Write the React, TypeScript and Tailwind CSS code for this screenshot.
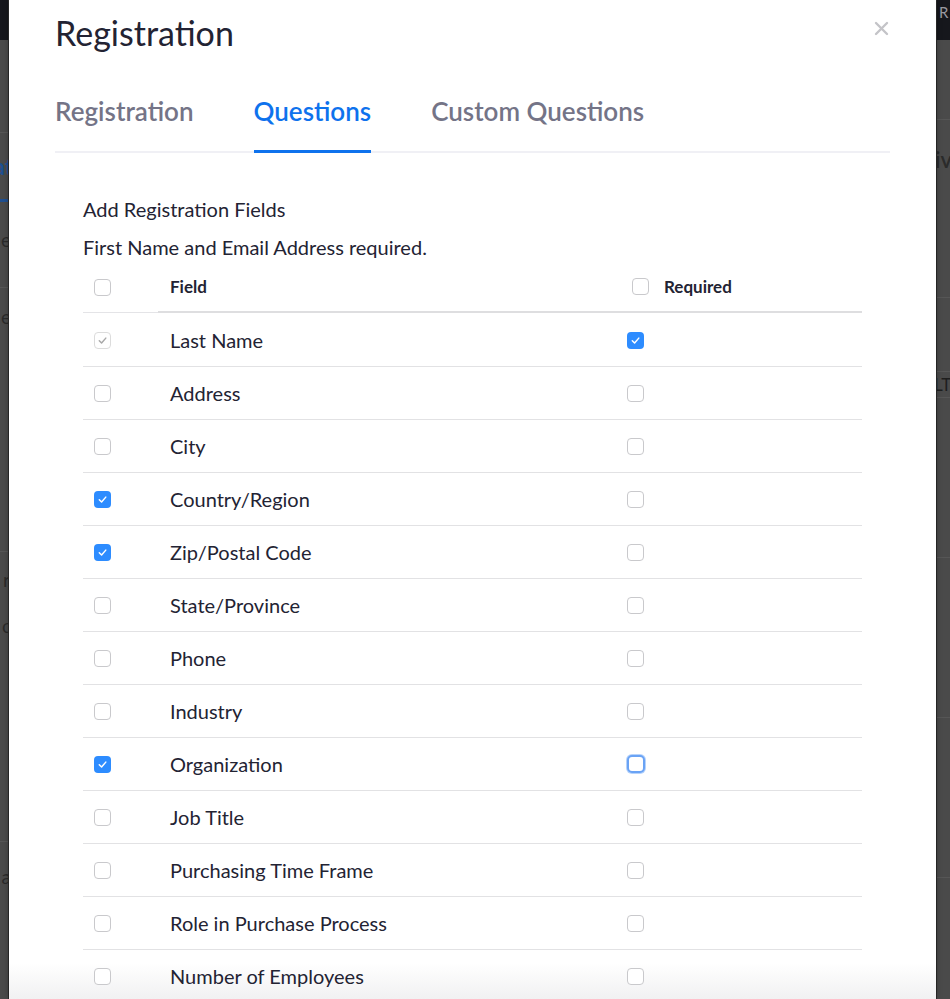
import React from 'react';

type BoxState = 'off' | 'on' | 'locked' | 'focus';

const fields: { label: string; include: BoxState; required: BoxState }[] = [
  { label: 'Last Name', include: 'locked', required: 'on' },
  { label: 'Address', include: 'off', required: 'off' },
  { label: 'City', include: 'off', required: 'off' },
  { label: 'Country/Region', include: 'on', required: 'off' },
  { label: 'Zip/Postal Code', include: 'on', required: 'off' },
  { label: 'State/Province', include: 'off', required: 'off' },
  { label: 'Phone', include: 'off', required: 'off' },
  { label: 'Industry', include: 'off', required: 'off' },
  { label: 'Organization', include: 'on', required: 'focus' },
  { label: 'Job Title', include: 'off', required: 'off' },
  { label: 'Purchasing Time Frame', include: 'off', required: 'off' },
  { label: 'Role in Purchase Process', include: 'off', required: 'off' },
  { label: 'Number of Employees', include: 'off', required: 'off' },
];

function Check({ color }: { color: string }) {
  return (
    <svg width="11" height="11" viewBox="0 0 12 12" fill="none">
      <path d="M2.5 6.3 5 8.8 9.6 3.4" stroke={color} strokeWidth="1.6" strokeLinecap="round" strokeLinejoin="round" />
    </svg>
  );
}

function Box({ state }: { state: BoxState }) {
  if (state === 'on') {
    return (
      <span className="w-[17px] h-[17px] rounded-[4px] bg-[#2d8cff] flex items-center justify-center">
        <Check color="#ffffff" />
      </span>
    );
  }
  if (state === 'locked') {
    return (
      <span className="w-[17px] h-[17px] rounded-[4px] border border-[#dcdcdc] bg-white flex items-center justify-center">
        <Check color="#a8a8a8" />
      </span>
    );
  }
  if (state === 'focus') {
    return <span className="w-[18px] h-[18px] rounded-[5px] border-2 border-[#6aa3f5] bg-white ring-1 ring-[#b6d3fb]" />;
  }
  return <span className="w-[17px] h-[17px] rounded-[4px] border border-[#c9c9cc] bg-white" />;
}

export default function App() {
  return (
    <div className="w-[950px] h-[999px] overflow-hidden flex bg-[#4a4a4a] font-['Lato','Open_Sans',sans-serif]">
      {/* backdrop, left edge */}
      <div className="w-[9px] shrink-0 flex flex-col border-r border-[#2c2c2c] text-[#2a2a2a] text-[19px]">
        <div className="h-[40px] bg-[#16171c]" />
        <div className="h-[93px] border-b border-[#565656]" />
        <div className="h-[66px] flex items-center justify-end overflow-hidden whitespace-nowrap font-bold text-[22px] text-[#1f4f90]">
          <span className="-mr-[5px]">at</span>
        </div>
        <div className="h-[3px] bg-[#1f4f90]" />
        <div className="h-[52px] flex items-end justify-end overflow-hidden whitespace-nowrap">
          <span className="-mr-[3px]">e</span>
        </div>
        <div className="h-[34px] border-b border-[#565656]" />
        <div className="h-[58px] flex items-center justify-end overflow-hidden whitespace-nowrap">
          <span className="-mr-[3px]">e</span>
        </div>
        <div className="h-[206px] border-b border-[#565656]" />
        <div className="h-[56px] flex items-center justify-end overflow-hidden whitespace-nowrap">
          <span className="-mr-[2px]">r</span>
        </div>
        <div className="h-[36px] flex items-center justify-end overflow-hidden whitespace-nowrap">
          <span className="-mr-[3px]">c</span>
        </div>
        <div className="h-[198px] border-b border-[#565656]" />
        <div className="h-[70px] flex items-center justify-end overflow-hidden whitespace-nowrap">
          <span className="-mr-[3px]">a</span>
        </div>
      </div>

      {/* modal */}
      <div className="relative flex-1 bg-white px-[46px] shadow-[0_0_6px_rgba(0,0,0,0.35)]">
        <h1 className="mt-[13px] text-[34px] leading-[40px] text-[#232333]">Registration</h1>
        <button className="absolute top-[20px] right-[47px] w-[16px] h-[16px] flex items-center justify-center">
          <svg width="15" height="15" viewBox="0 0 15 15">
            <path d="M2 2 13 13M13 2 2 13" stroke="#c4c4c8" strokeWidth="2.4" strokeLinecap="round" />
          </svg>
        </button>

        <div className="flex gap-[60px] border-b-2 border-[#f0f0f5]">
          <span className="pt-[42px] pb-[23px] -mb-[2px] border-b-[3px] border-transparent text-[26px] leading-[32px] font-semibold text-[#747487]">
            Registration
          </span>
          <span className="pt-[42px] pb-[23px] -mb-[2px] border-b-[3px] border-[#0e72ed] text-[26px] leading-[32px] font-semibold text-[#0e72ed]">
            Questions
          </span>
          <span className="pt-[42px] pb-[23px] -mb-[2px] border-b-[3px] border-transparent text-[26px] leading-[32px] font-semibold text-[#747487]">
            Custom Questions
          </span>
        </div>

        <div className="relative z-10 px-[28px] text-[#232333]">
          <p className="mt-[44px] text-[20px] leading-[24px]">Add Registration Fields</p>
          <p className="mt-[14px] text-[20px] leading-[24px]">First Name and Email Address required.</p>

          <div className="mt-[3px] grid grid-cols-[75px_457px_1fr]">
            <div className="h-[51px] pl-[11px] flex items-center border-b border-[#e4e4e7] mb-[1px]">
              <Box state="off" />
            </div>
            <div className="h-[51px] pl-[12px] flex items-center border-b-2 border-[#dedee0] text-[17px] font-bold">
              Field
            </div>
            <div className="h-[51px] pl-[17px] flex items-center gap-[15px] border-b-2 border-[#dedee0] text-[17px] font-bold">
              <Box state="off" />
              Required
            </div>

            {fields.map((f) => (
              <React.Fragment key={f.label}>
                <div className="h-[53px] pl-[11px] flex items-center border-b border-[#e2e2e4]">
                  <Box state={f.include} />
                </div>
                <div className="h-[53px] pl-[12px] flex items-center border-b border-[#e2e2e4] text-[20px]">
                  {f.label}
                </div>
                <div className="h-[53px] pl-[12px] flex items-center border-b border-[#e2e2e4]">
                  <Box state={f.required} />
                </div>
              </React.Fragment>
            ))}
          </div>
        </div>

        <div className="pointer-events-none absolute bottom-0 left-0 right-0 h-[36px] bg-linear-to-b from-white to-[#f1f1f2]" />
      </div>

      {/* backdrop, right edge */}
      <div className="w-[14px] shrink-0 flex flex-col border-l border-[#2c2c2c] text-[#2a2a2a] text-[22px]">
        <div className="h-[40px] bg-[#16171c] overflow-hidden whitespace-nowrap text-[15px] text-[#9a9aa0] pl-[2px] leading-[24px]">
          R
        </div>
        <div className="h-[80px] border-b border-[#565656]" />
        <div className="h-[78px] flex items-center overflow-hidden whitespace-nowrap font-semibold text-[#2b2b2b]">
          <span className="-ml-[2px]">iv</span>
        </div>
        <div className="h-[100px] border-b border-[#565656]" />
        <div className="h-[74px] border-b border-[#565656]" />
        <div className="h-[26px] flex items-center overflow-hidden whitespace-nowrap text-[17px] text-[#1e1e1e] border-b border-[#565656]">
          <span className="-ml-[3px]">LT</span>
        </div>
        <div className="h-[160px] border-b border-[#565656]" />
        <div className="h-[160px] border-b border-[#565656]" />
        <div className="h-[160px] border-b border-[#565656]" />
      </div>
    </div>
  );
}
